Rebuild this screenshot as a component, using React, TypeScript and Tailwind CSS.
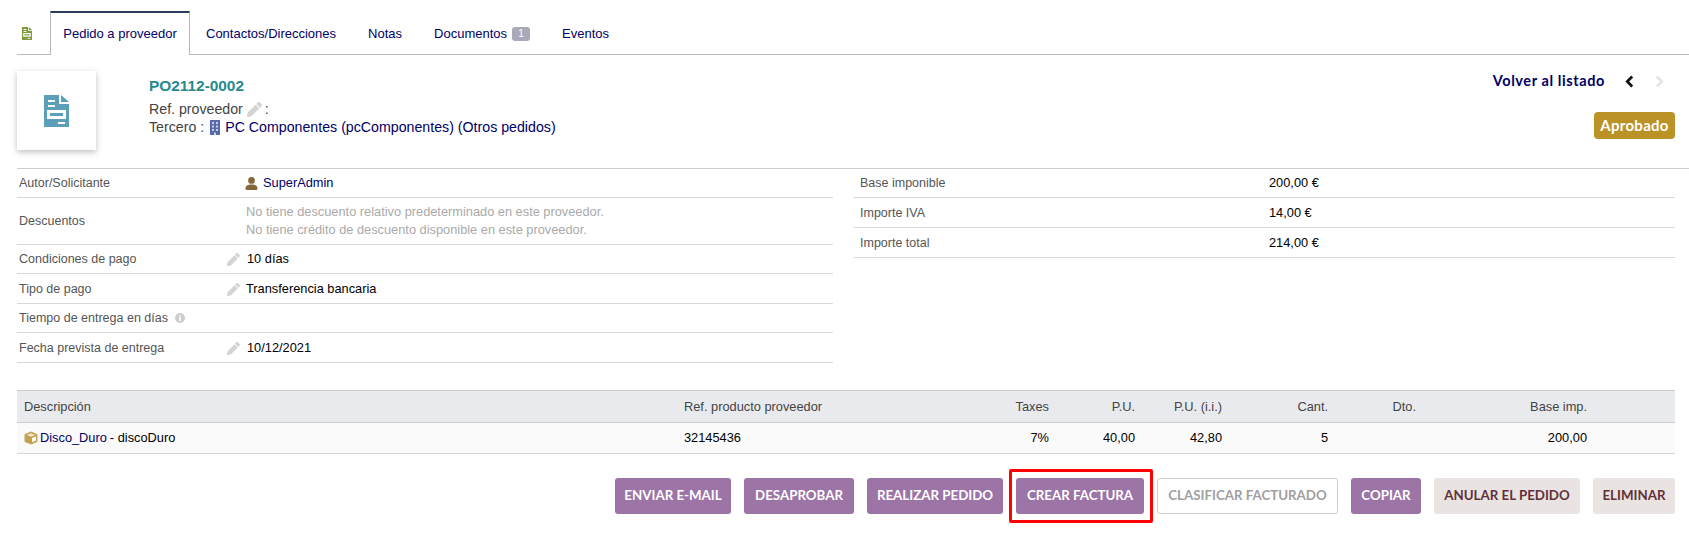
import React from "react";

const arial = "font-['Liberation_Sans',Arial,sans-serif]";
const lato = "font-['Lato',sans-serif]";

const PencilIcon = ({ className = "" }: { className?: string }) => (
  <svg viewBox="0 0 512 512" className={"w-[13px] h-[13px] " + className} fill="#d4d4d4">
    <path d="M497.9 142.1l-46.1 46.1c-4.7 4.7-12.3 4.7-17 0l-111-111c-4.7-4.7-4.7-12.3 0-17l46.1-46.1c18.7-18.7 49.1-18.7 67.9 0l60.1 60.1c18.8 18.7 18.8 49.1 0 67.9zM284.2 99.8L21.6 362.4.4 483.9c-2.9 16.4 11.4 30.6 27.8 27.8l121.5-21.3 262.6-262.6c4.7-4.7 4.7-12.3 0-17l-111-111c-4.8-4.7-12.4-4.7-17.1 0z" />
  </svg>
);

const DocIcon = ({ className, color }: { className: string; color: string }) => (
  <svg viewBox="0 0 25 32" className={className}>
    <path
      fill={color}
      fillRule="evenodd"
      d="M0 0H15V9H25V32H0ZM17 0L25 7H17ZM4 5V7H11V5ZM4 10V12H11V10ZM3 15V24H22V15ZM6 18H19V21H6ZM14 27V29H21V27Z"
    />
  </svg>
);

const tabs = ["Contactos/Direcciones", "Notas", "Documentos", "Eventos"];

const Tabs = () => (
  <div className="flex items-end h-[44px] border-b border-[#bbb] ml-[17px] text-[13px] text-[#000068]">
    <div className="w-[33px] h-full flex items-center pl-[5px] pt-[1px]">
      <DocIcon className="w-[10px] h-[13px]" color="#7f9a3c" />
    </div>
    <div className="h-[44px] -mb-px w-[140px] border-x border-[#bbb] border-t-2 border-t-[#2c3e5e] bg-white flex items-center justify-center">
      Pedido a proveedor
    </div>
    <div className="flex items-center h-full pt-[2px]">
      {tabs.map((t) => (
        <div key={t} className="px-4 flex items-center">
          {t}
          {t === "Documentos" && (
            <span className="ml-[5px] w-[18px] h-[14px] rounded-[3px] bg-[#a9a9b8] text-white text-[10px] flex items-center justify-center">
              1
            </span>
          )}
        </div>
      ))}
    </div>
  </div>
);

const Banner = () => (
  <div className="flex h-[114px] ml-[17px] border-b border-[#ccc] relative">
    <div className="mt-[16px] w-[79px] h-[79px] bg-white shadow-[0_2px_6px_rgba(0,0,0,0.25)] flex items-center justify-center">
      <DocIcon className="w-[25px] h-[32px]" color="#5b9fb8" />
    </div>
    <div className="ml-[53px] flex-1 text-[14.2px] text-[#444]">
      <div className="mt-[22px] text-[15.400px] leading-[18px] font-bold text-[#268a8e]">PO2112-0002</div>
      <div className="mt-[5px] leading-[18px] flex items-center">
        Ref. proveedor
        <PencilIcon className="ml-[4px] mr-[3px] w-[15px] h-[15px]" />:
      </div>
      <div className="leading-[18px] flex items-center">
        Tercero :
        <svg viewBox="0 0 12 15" className="w-[12px] h-[15px] ml-[5px] mr-[4px]">
          <path fill="#5a6aa8" d="M1 0H11V15H1Z" />
          <path
            fill="#c5cce6"
            d="M3 2H5V4H3ZM7 2H9V4H7ZM3 5.500H5V7.500H3ZM7 5.500H9V7.500H7ZM3 9H5V11H3ZM7 9H9V11H7ZM5 12.500H7V15H5Z"
          />
        </svg>
        <span className="text-[#000068]">PC Componentes (pcComponentes) (Otros pedidos)</span>
      </div>
    </div>
    <div className="flex flex-col items-end pr-[14px]">
      <div className={"mt-[17px] h-[18px] flex items-center text-[14.500px] tracking-[0.6px] font-bold text-[#000068] " + lato}>
        Volver al listado
        <svg viewBox="0 0 10 14" className="w-[9px] h-[13px] ml-[20px]" fill="none" stroke="#111" strokeWidth="3">
          <path d="M8 1.500L2.500 7L8 12.500" />
        </svg>
        <svg viewBox="0 0 10 14" className="w-[9px] h-[13px] ml-[21px] mr-[11px]" fill="none" stroke="#e4e4e4" strokeWidth="3">
          <path d="M2 1.500L7.500 7L2 12.500" />
        </svg>
      </div>
      <div className={"mt-[22px] w-[81px] h-[27px] rounded-[4px] bg-[#bb9226] text-white text-[15px] tracking-[0.3px] font-bold flex items-center justify-center " + lato}>
        Aprobado
      </div>
    </div>
  </div>
);

const Row = ({ h, label, children }: { h: string; label: React.ReactNode; children?: React.ReactNode }) => (
  <div className={"flex items-center border-b border-[#d8d8d8] pl-[2px] " + h}>
    <div className="w-[208px] text-[12.500px] text-[#555] flex items-center">{label}</div>
    <div className="flex items-center flex-1 text-[12.800px]">{children}</div>
  </div>
);

const Details = () => (
  <div className="flex ml-[17px] mr-[14px] text-[12.800px]">
    <div className="w-[816px]">
      <Row h="h-[29px]" label="Autor/Solicitante">
        <svg viewBox="0 0 14 14" className="w-[13px] h-[13px] ml-[18px] mr-[5px]" fill="#84663a">
          <circle cx="7" cy="3.700" r="3.600" />
          <path d="M0.500 12.500C0.500 9.500 3 8 7 8S13.500 9.500 13.500 12.500Q13.500 14 12 14H2Q0.500 14 0.500 12.500Z" />
        </svg>
        <span className="text-[#000068]">SuperAdmin</span>
      </Row>
      <Row h="h-[47px]" label="Descuentos">
        <div className="ml-[19px] leading-[18px] text-[#aaa]">
          <div>No tiene descuento relativo predeterminado en este proveedor.</div>
          <div>No tiene crédito de descuento disponible en este proveedor.</div>
        </div>
      </Row>
      <Row h="h-[29px]" label="Condiciones de pago">
        <PencilIcon />
        <span className="ml-[7px] text-black">10 días</span>
      </Row>
      <Row h="h-[30px] pt-[1px]" label="Tipo de pago">
        <PencilIcon />
        <span className="ml-[6px] text-black">Transferencia bancaria</span>
      </Row>
      <Row
        h="h-[29px]"
        label={
          <>
            Tiempo de entrega en días
            <svg viewBox="0 0 12 12" className="w-[10px] h-[10px] ml-[7px]">
              <circle cx="6" cy="6" r="6" fill="#ccc" />
              <rect x="5" y="5" width="2" height="4.500" fill="#fff" />
              <rect x="5" y="2.500" width="2" height="1.600" fill="#fff" />
            </svg>
          </>
        }
      />
      <Row h="h-[30px] pt-[1px]" label="Fecha prevista de entrega">
        <PencilIcon />
        <span className="ml-[7px] text-black">10/12/2021</span>
      </Row>
    </div>
    <div className="ml-[21px] flex-1">
      {[
        ["Base imponible", "200,00 €", "h-[29px]"],
        ["Importe IVA", "14,00 €", "h-[30px] pt-[1px]"],
        ["Importe total", "214,00 €", "h-[30px] pt-[1px]"],
      ].map(([l, v, h]) => (
        <div key={l} className={"flex items-center border-b border-[#d8d8d8] pl-[6px] " + h}>
          <div className="w-[409px] text-[12.500px] text-[#555]">{l}</div>
          <div className="text-black">{v}</div>
        </div>
      ))}
    </div>
  </div>
);

const cols = "grid grid-cols-[667px_276px_89px_86px_87px_106px_88px_171px] items-center";

const LinesTable = () => (
  <div className="mt-[27px] ml-[17px] mr-[14px] text-[12.800px]">
    <div className={cols + " h-[33px] bg-[#e9eaed] border-y border-[#ccc] text-[#444]"}>
      <div className="pl-[7px]">Descripción</div>
      <div>Ref. producto proveedor</div>
      <div className="text-right">Taxes</div>
      <div className="text-right">P.U.</div>
      <div className="text-right">P.U. (i.i.)</div>
      <div className="text-right">Cant.</div>
      <div className="text-right">Dto.</div>
      <div className="text-right">Base imp.</div>
    </div>
    <div className={cols + " h-[31px] bg-[#fafafa] border-b border-[#d8d8d8] text-black"}>
      <div className="pl-[7px] flex items-center text-[#000068]">
        <svg viewBox="0 0 14 14" className="w-[14px] h-[14px] mr-[2px]">
          <path fill="#c2a052" stroke="#c2a052" strokeLinejoin="round" d="M7 1L13 3.500V10.500L7 13L1 10.500V3.500Z" />
          <path fill="#f1e3bf" d="M2.500 4L7 2.300L11.500 4L7 5.800Z" />
          <path fill="#fff" d="M8 7L12 5.400V9.500L8 11.200Z" />
        </svg>
        Disco_Duro
        <span className="ml-[3px] text-black">- discoDuro</span>
      </div>
      <div>32145436</div>
      <div className="text-right">7%</div>
      <div className="text-right">40,00</div>
      <div className="text-right">42,80</div>
      <div className="text-right">5</div>
      <div />
      <div className="text-right">200,00</div>
    </div>
  </div>
);

const btn = "h-[36px] rounded-[3px] flex items-center justify-center text-[13.300px] font-bold uppercase " + lato;
const purple = btn + " bg-[#9c74a6] text-white";
const beige = btn + " bg-[#e9e4e1] text-[#633039]";

const Actions = () => (
  <div className="mt-[24px] mr-[14px] flex justify-end gap-[13px]">
    <div className={purple + " w-[116px]"}>Enviar e-mail</div>
    <div className={purple + " w-[110px]"}>Desaprobar</div>
    <div className={purple + " w-[136px]"}>Realizar pedido</div>
    <div className={purple + " w-[128px] relative"}>
      Crear factura
      <div className="absolute -left-[7px] -right-[9px] -top-[9px] -bottom-[9px] border-[3px] border-[#f00] rounded-[2px]" />
    </div>
    <div className={btn + " w-[181px] bg-white border border-[#cfcfcf] text-[#a0a0a0]"}>Clasificar facturado</div>
    <div className={purple + " w-[70px]"}>Copiar</div>
    <div className={beige + " w-[146px]"}>Anular el pedido</div>
    <div className={beige + " w-[82px]"}>Eliminar</div>
  </div>
);

export default function App() {
  return (
    <div className={"w-[1689px] h-[547px] overflow-hidden bg-white pt-[11px] " + arial}>
      <Tabs />
      <Banner />
      <Details />
      <LinesTable />
      <Actions />
    </div>
  );
}
